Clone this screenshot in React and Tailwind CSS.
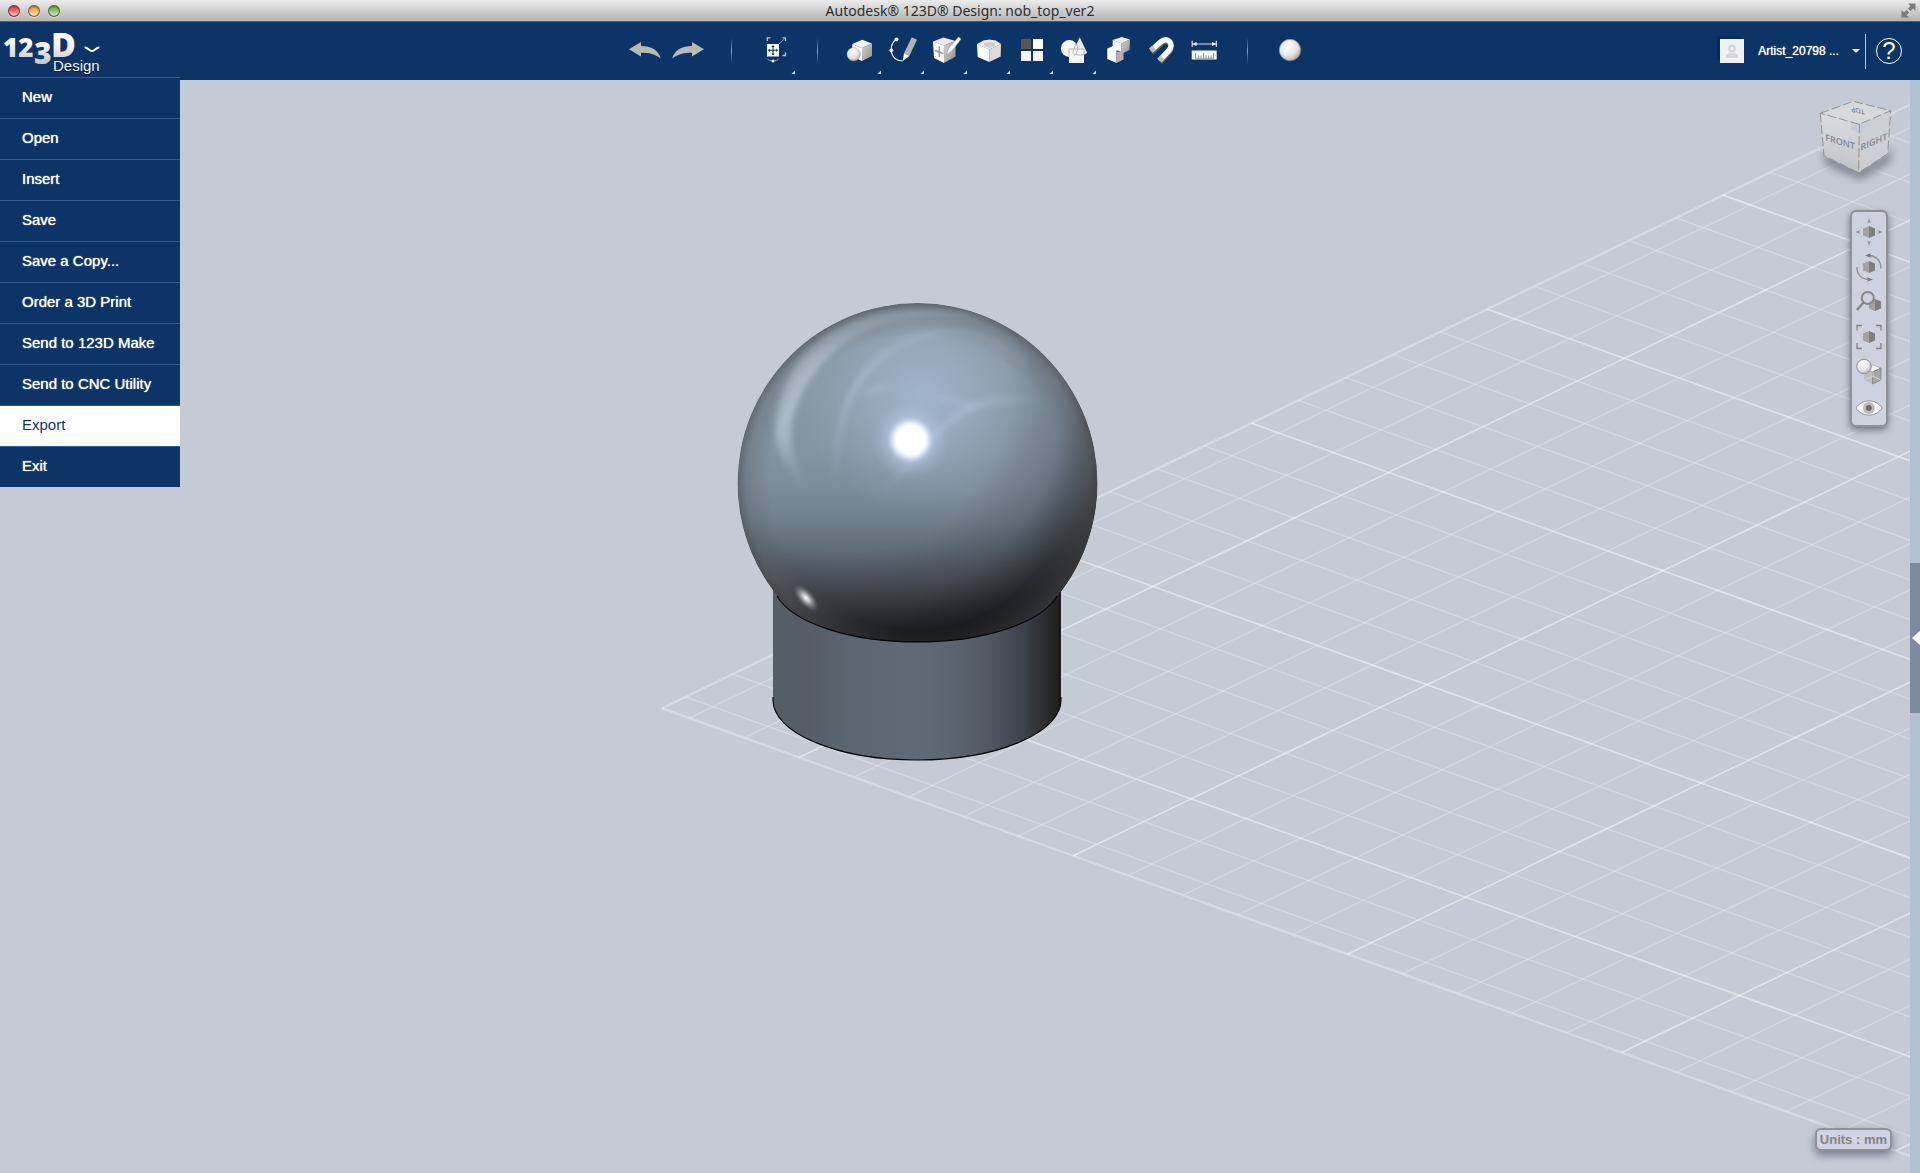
import React from "react";

const MENU = [
  "New",
  "Open",
  "Insert",
  "Save",
  "Save a Copy...",
  "Order a 3D Print",
  "Send to 123D Make",
  "Send to CNC Utility",
  "Export",
  "Exit",
];

/* ---------- title bar ---------- */

function TrafficLight({ label, color }) {
  return (
    <button
      aria-label={label}
      className={`h-3 w-3 rounded-full border border-black/45 shadow-[inset_0_1px_2px_rgba(0,0,0,0.45),inset_0_-3px_3px_rgba(255,255,255,0.55),0_1px_0_rgba(255,255,255,0.5)] ${color}`}
    />
  );
}

function TitleBar() {
  return (
    <div className="grid h-[22px] shrink-0 grid-cols-[1fr_auto_1fr] items-center border-b border-[#5c5c5c] bg-linear-to-b from-[#ececec] to-[#b4b4b4] px-2">
      <div className="flex gap-2">
        <TrafficLight label="Close" color="bg-[#ee5a5c]" />
        <TrafficLight label="Minimize" color="bg-[#f3b04a]" />
        <TrafficLight label="Zoom" color="bg-[#7fc35c]" />
      </div>
      <h1 className="font-['Noto_Sans','Open_Sans',sans-serif] text-[14px] leading-5 text-[#2e2e2e]">
        Autodesk® 123D® Design: nob_top_ver2
      </h1>
      <button aria-label="Full screen" className="-mr-1 justify-self-end">
        <svg width="15" height="15" viewBox="0 0 15 15" fill="#7a7a7a">
          <path d="M7 0.500H14.500V8L12 5.500L9.500 8L7 5.500L9.500 3Z" />
          <path d="M8 14.500H0.500V7L3 9.500L5.500 7L8 9.500L5.500 12Z" />
        </svg>
      </button>
    </div>
  );
}

/* ---------- header ---------- */

function Logo() {
  return (
    <button aria-label="123D Design menu" className="block">
      <svg width="106" height="55" viewBox="0 0 106 55">
        <defs>
          <linearGradient id="logo" x1="0" y1="10" x2="0" y2="42" gradientUnits="userSpaceOnUse">
            <stop offset="0" stopColor="#ffffff" />
            <stop offset="0.4" stopColor="#f5f5f5" />
            <stop offset="1" stopColor="#c4c4c4" />
          </linearGradient>
        </defs>
        <text x="3" y="35" fontSize="26" fill="url(#logo)" className="font-['Open_Sans',sans-serif] font-extrabold">
          12
          <tspan x="34" dy="7" fontSize="30">3</tspan>
          <tspan x="51" dy="-7" fontSize="34">D</tspan>
        </text>
        <text
          x="53"
          y="49"
          fontSize="15"
          fill="#f4f4f4"
          className="font-['Liberation_Sans',Arial,sans-serif] [text-shadow:0_1px_1px_#04142c]"
        >
          Design
        </text>
        <path d="M85.500 25.500C88 26 89.500 29 92 29C94.500 29 96 26 98.500 25.500" fill="none" stroke="#fff" strokeWidth="2" strokeLinecap="round" />
      </svg>
    </button>
  );
}

function Separator() {
  return (
    <div className="flex w-[43px] justify-center">
      <div className="h-[26px] w-px bg-linear-to-b from-transparent via-[#a39a90] to-transparent" />
    </div>
  );
}

function Tool({ label, menu, children }) {
  return (
    <button aria-label={label} className="w-[43px]">
      <svg width="43" height="58" viewBox="0 0 43 58">
        {children}
        {menu && <path d="M42 48.500V52H38.500Z" fill="#d5d8dc" />}
      </svg>
    </button>
  );
}

function ToolDefs() {
  return (
    <svg width="0" height="0" className="absolute">
      <defs>
        <radialGradient id="ball" cx="0.4" cy="0.35" r="0.7">
          <stop offset="0" stopColor="#ffffff" />
          <stop offset="0.6" stopColor="#e4e4e4" />
          <stop offset="1" stopColor="#a9a9a9" />
        </radialGradient>
        <linearGradient id="side" x1="0" y1="0" x2="1" y2="1">
          <stop offset="0" stopColor="#d4d4d4" />
          <stop offset="1" stopColor="#8f8f8f" />
        </linearGradient>
      </defs>
    </svg>
  );
}

function Toolbar() {
  return (
    <nav aria-label="Tools" className="flex items-center pl-4">
      <ToolDefs />
      <Tool label="Undo">
        <path d="M5 27.300L17 20V24C27 24 34.500 28 36.800 36.500C31 32 25 30.800 17 30.800V34.500Z" fill="#b9b9b9" />
      </Tool>
      <Tool label="Redo">
        <path d="M37 27.300L25 20V24C15 24 7.500 28 5.200 36.500C11 32 17 30.800 25 30.800V34.500Z" fill="#b9b9b9" />
      </Tool>
      <Separator />
      <Tool label="Transform" menu>
        <rect x="14" y="22" width="12" height="12.500" fill="#fff" />
        <path d="M20 24V32.500M16 28.200H24" stroke="#0d3467" strokeWidth="1.100" />
        <path d="M20 23l1.700 2h-3.400zM20 33.500l1.700-2h-3.400zM14.800 28.200l2-1.700v3.400zM25.200 28.200l-2-1.700v3.400z" fill="#0d3467" />
        <path d="M14.300 19V15.800H17.500M29.500 15.800H32.500V19M32.500 30.500V33.500H29.500" fill="none" stroke="#b9c0ca" strokeWidth="1.300" />
        <path d="M26 22L31.500 16.800" stroke="#8fa0b8" strokeWidth="1" />
        <path d="M14 36.500C16 39.800 24 39.800 26 36.500" fill="none" stroke="#8fa0b8" />
        <circle cx="20" cy="39" r="1.500" fill="#fff" />
      </Tool>
      <Separator />
      <Tool label="Primitives" menu>
        <path d="M23.300 17.700L33 21.500L23 26L13.300 22Z" fill="#f3f3f3" />
        <path d="M13.300 22L23 26V39L13.300 34.500Z" fill="#ffffff" />
        <path d="M23 26L33 21.500V34L23 39Z" fill="url(#side)" />
        <circle cx="14.700" cy="32.200" r="6.700" fill="url(#ball)" stroke="#9a9a9a" strokeWidth="0.400" />
      </Tool>
      <Tool label="Sketch" menu>
        <path d="M14.500 17.300C10.500 20 9 24 9.200 28.300C9.500 35 15 39.500 20.700 38.700" fill="none" stroke="#fff" strokeWidth="1.100" />
        <circle cx="14.500" cy="17.300" r="1.900" fill="#fff" />
        <circle cx="9.300" cy="28.300" r="1.900" fill="#fff" />
        <path d="M29.800 15.200L35 17.800L27.300 34L22 31.200Z" fill="#b4b4b4" />
        <path d="M22 31.200L27.300 34L20.700 39Z" fill="#fff" />
      </Tool>
      <Tool label="Construct" menu>
        <path d="M8 19.500L18.500 15.500L30.500 19L19 23.500Z" fill="#e9e9e9" />
        <path d="M8 19.500L19 23.500V41L9 36Z" fill="#fff" />
        <path d="M19 23.500L30.500 19V34.500L19 41Z" fill="url(#side)" />
        <path d="M14.300 24.500V35M10 28.500L18.500 31.500" stroke="#9a9a9a" strokeWidth="1.500" />
        <path d="M33.500 15L36 17L27 29L21.500 32.500L23.500 26.500Z" fill="#fff" stroke="#a8a8a8" strokeWidth="0.700" />
      </Tool>
      <Tool label="Modify" menu>
        <path d="M9 22L15 18.800H28L33 22L21.300 27.500Z" fill="#ececec" />
        <path d="M9 22L21.300 27.500V40L9.700 35Z" fill="#fff" />
        <path d="M21.300 27.500L33 22L32.700 34.500L21.300 40Z" fill="#dcdcdc" />
        <path d="M15 18.800H28C28 23 26 25.500 21.500 25.800C17 25.500 15.500 23 15 18.800Z" fill="#cbcbcb" />
        <path d="M15 18.800L21.500 17.600L28 18.800V21C23 19.800 19 20.500 15.300 21Z" fill="#e8e8e8" />
      </Tool>
      <Tool label="Pattern" menu>
        <rect x="10" y="17" width="10" height="10" fill="#565656" />
        <rect x="22" y="17" width="10" height="10" fill="#fff" />
        <rect x="10" y="29" width="10" height="10" fill="#f4f4f4" />
        <rect x="22" y="29" width="10" height="10" fill="#f4f4f4" />
      </Tool>
      <Tool label="Grouping" menu>
        <circle cx="15.300" cy="26.500" r="8.400" fill="#fbfbfb" />
        <path d="M25.700 15.300L33.200 31C30 33.500 22 33.500 18.500 31Z" fill="#e9e9e9" />
        <rect x="15" y="27" width="15" height="14" fill="#f6f6f6" />
        <path d="M15 34.500V27H23.500M18.500 31C20 33 26 33.500 30 32.500V27H23.500C23.500 30 22 33 19.500 34" fill="none" stroke="#b0b0b0" strokeWidth="0.900" />
        <path d="M23.700 26.500C23.700 24 22.500 21.800 22 21.500L18.800 30.500" fill="none" stroke="#b0b0b0" strokeWidth="0.900" />
      </Tool>
      <Tool label="Combine">
        <path d="M15.700 18L24.700 15L33 17.500L24.500 21.500Z" fill="#ececec" />
        <path d="M15.700 18L24.500 21.500V30L15.700 27Z" fill="#fff" />
        <path d="M24.500 21.500L33 17.500L32.500 28L24.500 32Z" fill="url(#side)" />
        <path d="M10.300 26.500L16 24L19.500 25.500V41L10.300 37Z" fill="#fff" />
        <path d="M19.500 30L24.500 29L26.500 31V37.500L19.500 41Z" fill="#b0b0b0" />
      </Tool>
      <Tool label="Snap">
        <path d="M11.500 30.500L21 21.500C24 18.500 27.500 18.500 30 21.500C32 24.500 31 28 28.500 30.500L20 40" fill="none" stroke="#6b655e" strokeWidth="5.500" />
        <path d="M11 28.500L20.500 20C24 16.800 27.500 17 30 20C32 23 31 26 28.500 28.800L19.500 38.500" fill="none" stroke="#f7f7f7" strokeWidth="5.500" />
        <path d="M11 28.500L14 25.800M22.400 35.300L19.500 38.500" stroke="#bdbdbd" strokeWidth="5.500" />
      </Tool>
      <Tool label="Measure">
        <path d="M9.200 18.800V25M33.300 18.800V25M10 22H33" stroke="#dfe3ea" strokeWidth="1.200" />
        <path d="M9.500 22l4-2v4zM33 22l-4-2v4z" fill="#fff" />
        <rect x="8.700" y="28.500" width="25" height="9" fill="#f6f6f6" />
        <path d="M12.500 31V36.500M15.500 33.500V36.500M18 33.500V36.500M20.500 31V36.500M23 33.500V36.500M25.500 33.500V36.500M28 33.500V36.500M30.500 31V36.500M12.500 36.300H31" stroke="#8a8b8d" strokeWidth="0.800" />
      </Tool>
      <Separator />
      <Tool label="Material">
        <circle cx="21" cy="28" r="10.700" fill="url(#ball)" stroke="#8d8a86" strokeWidth="0.800" />
      </Tool>
    </nav>
  );
}

function Account() {
  return (
    <div className="flex items-center justify-end pr-[18px]">
      <button className="flex items-center text-white">
        <span className="flex h-6 w-6 items-center justify-center bg-[#f0f0f0] shadow-[-3px_-3px_1px_#0a2b55]">
          <svg width="14" height="14" viewBox="0 0 14 14" fill="none" stroke="#d2d2d2" strokeWidth="2">
            <circle cx="7" cy="4.500" r="2.800" />
            <path d="M2 12.500C3 9 11 9 12 12.500Z" />
          </svg>
        </span>
        <span className="ml-[14px] text-[12px] leading-4 [text-shadow:0_0_1px_#ffffff]">Artist_20798 ...</span>
        <svg className="ml-[13px]" width="8" height="4" viewBox="0 0 8 4">
          <path d="M0 0H8L4 4Z" fill="#fff" />
        </svg>
      </button>
      <div className="mr-[10px] ml-[5px] h-[35px] w-px bg-[#a9cfe8]" />
      <button
        aria-label="Help"
        className="flex h-[26px] w-[26px] items-center justify-center rounded-full border border-white text-[24px] leading-none text-white"
      >
        ?
      </button>
    </div>
  );
}

function MainMenu() {
  return (
    <ul className="absolute top-full left-0 z-10 -mt-[3px] w-[180px] bg-[#0d3467]">
      {MENU.map((item) => (
        <li key={item}>
          <button
            className={
              item === "Export"
                ? "block h-[41px] w-full border-t border-[#365c8c] bg-white pb-0.5 pl-[22px] text-left text-[15px] text-[#0d3467]"
                : "block h-[41px] w-full border-t border-[#365c8c] pb-0.5 pl-[22px] text-left text-[15px] text-white [text-shadow:0_0_1px_#ffffff]"
            }
          >
            {item}
          </button>
        </li>
      ))}
    </ul>
  );
}

/* ---------- canvas ---------- */

const ORIGIN = [662, 708.3];
const U = [47.16, -22.81];
const V = [54.84, 19.67];
const STEPS = Array.from({ length: 45 }, (_, i) => i + 0.5);

function GridLine({ from, dir, length, major, edge }) {
  return (
    <line
      x1={from[0]}
      y1={from[1]}
      x2={from[0] + dir[0] * length}
      y2={from[1] + dir[1] * length}
      stroke="#ffffff"
      strokeOpacity={edge ? 0.3 : major ? 0.48 : 0.27}
      strokeWidth={edge ? 2.5 : major ? 1.7 : 1.3}
    />
  );
}

function Grid() {
  const at = (d, t) => [ORIGIN[0] + d[0] * t, ORIGIN[1] + d[1] * t];
  return (
    <g>
      <GridLine from={ORIGIN} dir={U} length={45} edge />
      <GridLine from={ORIGIN} dir={V} length={45} edge />
      {STEPS.map((t) => (
        <React.Fragment key={t}>
          <GridLine from={at(U, t)} dir={V} length={45} major={(t - 2.5) % 5 === 0} />
          <GridLine from={at(V, t)} dir={U} length={45} major={(t - 2.5) % 5 === 0} />
        </React.Fragment>
      ))}
    </g>
  );
}

function Model() {
  return (
    <g>
      <defs>
        <linearGradient id="body" x1="0" y1="303" x2="0" y2="663" gradientUnits="userSpaceOnUse">
          <stop offset="0" stopColor="#73808a" />
          <stop offset="0.03" stopColor="#7f8d99" />
          <stop offset="0.12" stopColor="#8797a4" />
          <stop offset="0.25" stopColor="#8898a6" />
          <stop offset="0.42" stopColor="#8393a2" />
          <stop offset="0.52" stopColor="#7c8b9a" />
          <stop offset="0.6" stopColor="#71808d" />
          <stop offset="0.68" stopColor="#626e79" />
          <stop offset="0.77" stopColor="#4f5560" />
          <stop offset="0.86" stopColor="#363a3f" />
          <stop offset="0.95" stopColor="#1d1e20" />
          <stop offset="1" stopColor="#111" />
        </linearGradient>
        <radialGradient id="shade" cx="850" cy="395" r="285" gradientUnits="userSpaceOnUse">
          <stop offset="0.55" stopColor="#0b0b0c" stopOpacity="0" />
          <stop offset="0.75" stopColor="#0b0b0c" stopOpacity="0.18" />
          <stop offset="0.88" stopColor="#0b0b0c" stopOpacity="0.5" />
          <stop offset="1" stopColor="#0b0b0c" stopOpacity="0.92" />
        </radialGradient>
        <radialGradient id="rim" cx="917.500" cy="483" r="180" gradientUnits="userSpaceOnUse">
          <stop offset="0.82" stopColor="#5c5f62" stopOpacity="0" />
          <stop offset="0.95" stopColor="#5c5f62" stopOpacity="0.35" />
          <stop offset="1" stopColor="#4a4c4e" stopOpacity="0.6" />
        </radialGradient>
        <radialGradient id="sky" cx="922" cy="395" r="120" gradientUnits="userSpaceOnUse">
          <stop offset="0" stopColor="#a6b8d2" stopOpacity="0.85" />
          <stop offset="0.4" stopColor="#a2b4cb" stopOpacity="0.6" />
          <stop offset="1" stopColor="#98a9ba" stopOpacity="0" />
        </radialGradient>
        <radialGradient id="glow" cx="910.500" cy="440" r="40" gradientUnits="userSpaceOnUse">
          <stop offset="0" stopColor="#fff" />
          <stop offset="0.36" stopColor="#fff" />
          <stop offset="0.44" stopColor="#eaf2ff" stopOpacity="0.85" />
          <stop offset="0.58" stopColor="#c4d5f2" stopOpacity="0.4" />
          <stop offset="1" stopColor="#a9bcd8" stopOpacity="0" />
        </radialGradient>
        <radialGradient id="spark">
          <stop offset="0" stopColor="#fff" />
          <stop offset="0.3" stopColor="#d6d9e2" stopOpacity="0.8" />
          <stop offset="1" stopColor="#70757d" stopOpacity="0" />
        </radialGradient>
        <linearGradient id="streakLeft" x1="0" y1="310" x2="0" y2="490" gradientUnits="userSpaceOnUse">
          <stop offset="0" stopColor="#a9bac9" stopOpacity="0.7" />
          <stop offset="0.3" stopColor="#bccbd9" stopOpacity="0.9" />
          <stop offset="0.7" stopColor="#b0c0ce" stopOpacity="0.75" />
          <stop offset="1" stopColor="#9dadbb" stopOpacity="0" />
        </linearGradient>
        <linearGradient id="streakMid" x1="835" y1="490" x2="935" y2="320" gradientUnits="userSpaceOnUse">
          <stop offset="0" stopColor="#aec0d4" stopOpacity="0" />
          <stop offset="0.5" stopColor="#b2c4da" stopOpacity="0.75" />
          <stop offset="1" stopColor="#aabbcc" stopOpacity="0.5" />
        </linearGradient>
        <linearGradient id="streakRight" x1="880" y1="0" x2="1055" y2="0" gradientUnits="userSpaceOnUse">
          <stop offset="0" stopColor="#b2c4dc" stopOpacity="0" />
          <stop offset="0.5" stopColor="#b2c4dc" stopOpacity="0.7" />
          <stop offset="1" stopColor="#a2b2c2" stopOpacity="0" />
        </linearGradient>
        <linearGradient id="cylinder" x1="773" y1="0" x2="1061" y2="0" gradientUnits="userSpaceOnUse">
          <stop offset="0" stopColor="#555d65" />
          <stop offset="0.13" stopColor="#565d67" />
          <stop offset="0.25" stopColor="#5a656e" />
          <stop offset="0.5" stopColor="#606b77" />
          <stop offset="0.66" stopColor="#59636c" />
          <stop offset="0.76" stopColor="#505661" />
          <stop offset="0.87" stopColor="#3c424a" />
          <stop offset="0.96" stopColor="#272828" />
          <stop offset="1" stopColor="#1a1a1a" />
        </linearGradient>
        <filter id="soft" x="-20%" y="-20%" width="140%" height="140%">
          <feGaussianBlur stdDeviation="3" />
        </filter>
        <clipPath id="ballClip">
          <circle cx="917.500" cy="483" r="180" />
        </clipPath>
        <clipPath id="seamClip">
          <path d="M720 290H1120V596H1057A144 60 0 0 1 777 596H720Z" />
        </clipPath>
      </defs>

      <path d="M773 580H1061V700A144 60 0 0 1 773 700Z" fill="url(#cylinder)" />
      <path d="M773 697V700A144 60 0 0 0 1061 700V697" fill="none" stroke="#050505" strokeWidth="1.200" />

      <g clipPath="url(#seamClip)">
        <g clipPath="url(#ballClip)">
          <circle cx="917.500" cy="483" r="180" fill="url(#body)" />
          <circle cx="922" cy="395" r="120" fill="url(#sky)" />
          <g filter="url(#soft)">
            <path d="M775 432C776 372 820 315 905 309C945 307 965 312 985 320C930 311 880 318 847 341C812 367 792 400 791 436C791 455 800 475 812 492C790 478 777 455 775 432Z" fill="url(#streakLeft)" />
            <path d="M835 492C832 400 865 345 940 332C975 328 1005 343 1028 365" fill="none" stroke="url(#streakMid)" strokeWidth="6" opacity="0.75" />
            <path d="M880 493C915 462 935 425 970 408C1000 395 1030 396 1060 412" fill="none" stroke="url(#streakRight)" strokeWidth="6" />
            <path d="M938 396L975 408" stroke="#b9cae0" strokeWidth="3" opacity="0.5" />
            <path d="M864 393L887 386" stroke="#b9cae0" strokeWidth="3" opacity="0.5" />
          </g>
          <circle cx="917.500" cy="483" r="180" fill="url(#shade)" />
          <circle cx="917.500" cy="483" r="180" fill="url(#rim)" />
          <ellipse cx="806" cy="598" rx="17" ry="8" transform="rotate(48 806 598)" fill="url(#spark)" />
          <circle cx="910.500" cy="440" r="40" fill="url(#glow)" />
        </g>
      </g>
      <path d="M777 596A144 60 0 0 0 1057 596" fill="none" stroke="#050505" strokeWidth="1.200" />
    </g>
  );
}

function Scene() {
  return (
    <svg
      role="img"
      aria-label="Sphere on a cylinder above the work plane"
      className="absolute inset-0 h-full w-full"
      viewBox="0 80 1910 1093"
      preserveAspectRatio="xMidYMid slice"
    >
      <Grid />
      <Model />
    </svg>
  );
}

function ViewCube() {
  return (
    <button aria-label="View cube" className="absolute top-[14px] right-[10px]">
      <svg width="90" height="90" viewBox="1810 94 90 90">
        <defs>
          <filter id="cubeShadow" x="-40%" y="-40%" width="180%" height="180%">
            <feGaussianBlur stdDeviation="4" />
          </filter>
          <linearGradient id="cubeFace" x1="0" y1="0" x2="0" y2="1">
            <stop offset="0" stopColor="#dcdee0" />
            <stop offset="1" stopColor="#c3c5c8" />
          </linearGradient>
        </defs>
        <path d="M1823 150L1859 168L1893 149L1889 163L1860 180L1826 165Z" fill="#6e7682" opacity="0.8" filter="url(#cubeShadow)" />
        <g opacity="0.94">
          <path d="M1820.300 113.300L1853.300 101.300L1890.700 110.700L1859.300 124.300Z" fill="#d9dbdd" />
          <path d="M1820.300 113.300L1859.300 124.300L1858.700 172.700L1824 155.700Z" fill="url(#cubeFace)" />
          <path d="M1859.300 124.300L1890.700 110.700L1887.700 153.700L1858.700 172.700Z" fill="#cdd0d4" />
        </g>
        <path d="M1851 122L1859.300 124.300L1865 122V130L1859.300 133L1851 130Z" fill="#c6ced9" />
        <g fill="none" stroke="#909396" strokeWidth="1" strokeDasharray="9 3">
          <path d="M1820.300 113.300L1853.300 101.300L1890.700 110.700L1859.300 124.300Z" />
          <path d="M1820.300 113.300L1824 155.700L1858.700 172.700L1887.700 153.700L1890.700 110.700" />
          <path d="M1859.300 124.300L1858.700 172.700" />
        </g>
        <g fill="#7f858e" textAnchor="middle" className="font-['Open_Sans',sans-serif] font-semibold">
          <text fontSize="9" transform="translate(1840 145) skewY(17)">FRONT</text>
          <text fontSize="9" transform="translate(1874 145) skewY(-23)">RIGHT</text>
          <text fontSize="7" transform="translate(1857 108) rotate(190) skewX(25)">TOP</text>
        </g>
      </svg>
    </button>
  );
}

function Hex({ x = 19, y = 17 }) {
  return (
    <g transform={`translate(${x} ${y})`}>
      <path d="M0 -6L-6 -3.500V3.500L0 6Z" fill="#a2a2a2" />
      <path d="M0 -6L6 -3.500V3.500L0 6Z" fill="#7e7e7e" />
    </g>
  );
}

function NavButton({ label, children }) {
  return (
    <button aria-label={label} className="block">
      <svg width="34" height="35" viewBox="2 0 34 35">
        {children}
      </svg>
    </button>
  );
}

function NavPanel() {
  return (
    <nav
      aria-label="View"
      className="absolute top-[130px] right-[22px] rounded-md border-2 border-[#8e9094] bg-[#cdd3de] pt-[3px] shadow-[0_3px_7px_rgba(60,70,85,0.65)]"
    >
      <NavButton label="Pan">
        <Hex />
        <path d="M19 3.500l2 5l-2-1.500l-2 1.500zM19 30.500l2-5l-2 1.500l-2-1.500zM5.500 17l5-2l-1.500 2l1.500 2zM32.500 17l-5-2l1.500 2l-1.500 2z" fill="#8a8a8a" />
      </NavButton>
      <NavButton label="Orbit">
        <Hex />
        <path d="M31 18.500C31 10 25 5.500 18 5.500M7 17C7 25 12 29.500 20 29.500" fill="none" stroke="#8a8a8a" strokeWidth="1.300" />
        <path d="M15 5.500l6-2.200l-1 2.200l1 2.200zM23 29.500l-6-2.200l1 2.200l-1 2.200z" fill="#7a7a7a" />
      </NavButton>
      <NavButton label="Zoom">
        <Hex x={25} y={20} />
        <circle cx="17.800" cy="13" r="6" fill="#cdd3de" fillOpacity="0.6" stroke="#858585" strokeWidth="2" />
        <path d="M13.500 17.500L7 25" stroke="#858585" strokeWidth="2.400" />
      </NavButton>
      <NavButton label="Fit">
        <Hex />
        <path d="M7 10.500V5.500H12M26 5.500H31V10.500M31 23V28.500H26M12 28.500H7V23" fill="none" stroke="#838383" strokeWidth="1.300" />
      </NavButton>
      <NavButton label="Visual style">
        <g transform="translate(0 -2)">
          <path d="M14 16L23 12L31 15L22.500 19Z" fill="#f4f4f4" stroke="#a0a0a0" strokeWidth="0.700" />
          <path d="M14 16L22.500 19V31L14 27Z" fill="#bdbdbd" />
          <path d="M22.500 19L31 15V27L22.500 31Z" fill="#a6a6a6" stroke="#7f7f7f" strokeWidth="0.800" />
          <path d="M14 27L23 23.500L31 27M23 23.500V19" fill="none" stroke="#dddddd" strokeWidth="0.800" />
          <circle cx="14" cy="13.500" r="7.300" fill="url(#ball)" stroke="#8b8b8b" strokeWidth="0.900" />
        </g>
      </NavButton>
      <NavButton label="Show or hide">
        <path d="M6 18C12 8.500 26 8.500 32 18C26 27.500 12 27.500 6 18Z" fill="#f5f5f5" stroke="#8b8b8b" strokeWidth="0.900" />
        <circle cx="18.800" cy="18" r="6" fill="#bcbcbc" />
        <circle cx="18.800" cy="18" r="3" fill="#6c6c6c" />
      </NavButton>
    </nav>
  );
}

export default function App() {
  return (
    <div className="flex h-screen flex-col overflow-hidden bg-[#c4cbd5] font-['Liberation_Sans',Arial,sans-serif]">
      <TitleBar />
      <header className="relative grid h-[58px] shrink-0 grid-cols-[1fr_auto_1fr] bg-[#0d3467]">
        <div className="flex items-start">
          <Logo />
        </div>
        <Toolbar />
        <Account />
        <MainMenu />
      </header>
      <main className="flex min-h-0 flex-1">
        <section className="relative flex-1 overflow-hidden">
          <Scene />
          <ViewCube />
          <NavPanel />
          <button className="absolute right-[18px] bottom-[22px] rounded-md border-2 border-[#8e9094] bg-[#cfd4e2] px-[3px] text-[13px] leading-[19px] font-bold text-[#838383] shadow-[0_4px_8px_rgba(60,70,85,0.6)]">
            Units : mm
          </button>
        </section>
        <aside className="flex w-[10px] flex-col justify-center bg-[#b3c0d2] pt-[22px]">
          <button aria-label="Open side panel" className="flex h-[150px] items-center justify-end bg-[#7b8c9e]">
            <svg width="8" height="14" viewBox="0 0 8 14">
              <path d="M8 0V14L0 7Z" fill="#fff" />
            </svg>
          </button>
        </aside>
      </main>
    </div>
  );
}
